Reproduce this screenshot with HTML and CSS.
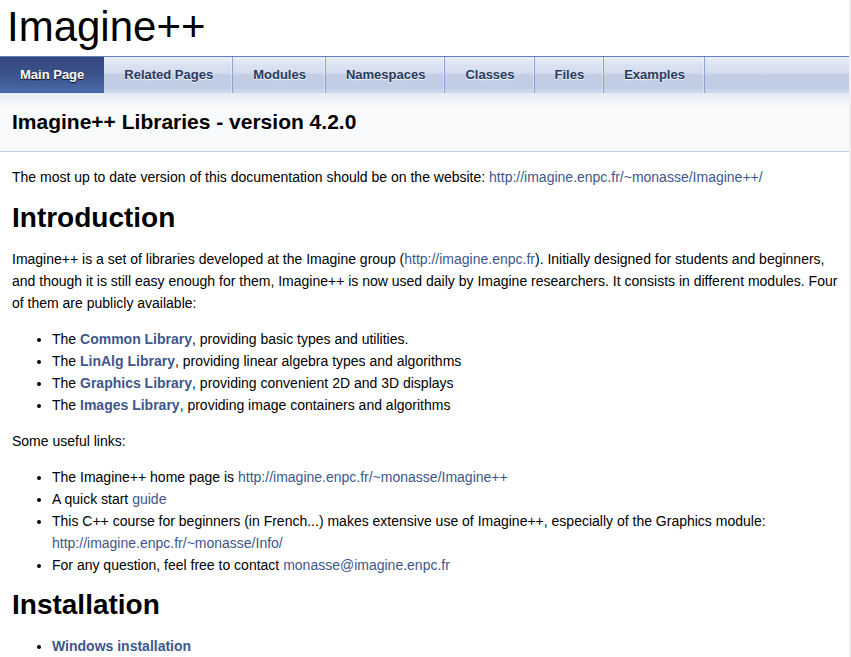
FILE: index.html
```html
<!DOCTYPE html>
<html>
<head>
<meta charset="utf-8">
<title>Imagine++: Imagine++ Libraries - version 4.2.0</title>
<link rel="stylesheet" href="styles.css">
</head>
<body>
<div class="page">
  <div class="top">
    <div class="projectname">Imagine++</div>
    <div class="tabs">
      <ul class="tablist">
        <li class="current"><a href="#">Main&nbsp;Page</a></li>
        <li><a href="#">Related&nbsp;Pages</a></li>
        <li><a href="#">Modules</a></li>
        <li><a href="#">Namespaces</a></li>
        <li><a href="#">Classes</a></li>
        <li><a href="#">Files</a></li>
        <li><a href="#">Examples</a></li>
      </ul>
    </div>
  </div>
  <div class="header">
    <div class="headertitle">
      <div class="title">Imagine++ Libraries - version 4.2.0</div>
    </div>
  </div>
  <div class="contents">
    <div class="textblock">
      <p>The most up to date version of this documentation should be on the website: <a href="#">http://imagine.enpc.fr/~monasse/Imagine++/</a></p>
      <h1>Introduction</h1>
      <p>Imagine++ is a set of libraries developed at the Imagine group (<a href="#">http://imagine.enpc.fr</a>). Initially designed for students and beginners, and though it is still easy enough for them, Imagine++ is now used daily by Imagine researchers. It consists in different modules. Four of them are publicly available:</p>
      <ul>
        <li>The <a class="el" href="#">Common Library</a>, providing basic types and utilities.</li>
        <li>The <a class="el" href="#">LinAlg Library</a>, providing linear algebra types and algorithms</li>
        <li>The <a class="el" href="#">Graphics Library</a>, providing convenient 2D and 3D displays</li>
        <li>The <a class="el" href="#">Images Library</a>, providing image containers and algorithms</li>
      </ul>
      <p>Some useful links:</p>
      <ul>
        <li>The Imagine++ home page is <a href="#">http://imagine.enpc.fr/~monasse/Imagine++</a></li>
        <li>A quick start <a href="#">guide</a></li>
        <li>This C++ course for beginners (in French...) makes extensive use of Imagine++, especially of the Graphics module: <a href="#">http://imagine.enpc.fr/~monasse/Info/</a></li>
        <li>For any question, feel free to contact <a href="#">monasse@imagine.enpc.fr</a></li>
      </ul>
      <h1>Installation</h1>
      <ul>
        <li><a class="el" href="#">Windows installation</a></li>
      </ul>
    </div>
  </div>
</div>
</body>
</html>
```

FILE: styles.css
```css
html {
  background: #eeeeee;
}
body {
  margin: 0;
  font-family: "Liberation Sans", Arial, sans-serif;
  font-size: 14px;
  line-height: 22px;
  color: #000;
}
.page {
  margin-right: 2px;
  background: #fff;
  min-height: 657px;
}
.projectname {
  height: 56px;
  box-sizing: border-box;
  padding: 3px 0 0 7px;
  font-size: 42px;
  line-height: 48px;
  color: #000;
}
.tabs {
  height: 37px;
  box-sizing: border-box;
  border-top: 1px solid #5f7fbf;
  background: linear-gradient(to bottom, #e9edf6 0px, #dbe2f1 8px, #d3dbee 16px, #c2cee6 18px, #c1cde5 31px, #cfd8ec 34px, #c9d3ea 36px);
}
.tablist {
  margin: 0;
  padding: 0;
  list-style: none;
  display: flex;
  font-size: 13px;
  line-height: 36px;
}
.tablist li {
  display: block;
}
.tablist a {
  display: block;
  padding: 0 20px;
  font-weight: bold;
  color: #283a5d;
  text-decoration: none;
  text-shadow: 0 1px 1px rgba(255, 255, 255, 0.9);
  box-shadow: inset -1px 0 0 #8ca2cf, inset -2px 0 0 rgba(255, 255, 255, 0.35);
}
.tablist li.current a {
  color: #fff;
  text-shadow: 0 1px 1px rgba(0, 0, 0, 1);
  background: linear-gradient(to bottom, #34497e 0%, #3b5189 45%, #4663a2 85%, #4b68a9 100%);
  box-shadow: none;
}
.header {
  background: linear-gradient(to bottom, #e6ebf5 0px, #f9fafc 14px, #f9fafc 100%);
  border-bottom: 1px solid #c4cfe5;
}
.headertitle {
  padding: 5px 5px 5px 10px;
}
.title {
  font-size: 21px;
  line-height: 28px;
  font-weight: bold;
  margin: 10px 2px;
}
.contents {
  margin: 10px 8px 0 12px;
}
.textblock p {
  margin: 14px 0;
}
.textblock h1 {
  font-size: 28px;
  line-height: 22px;
  font-weight: bold;
  margin: 18.76px 0;
}
.textblock ul {
  margin: 14px 0;
  padding-left: 40px;
}
a {
  color: #3d578c;
  text-decoration: none;
  font-weight: normal;
}
a.el {
  font-weight: bold;
}
```
